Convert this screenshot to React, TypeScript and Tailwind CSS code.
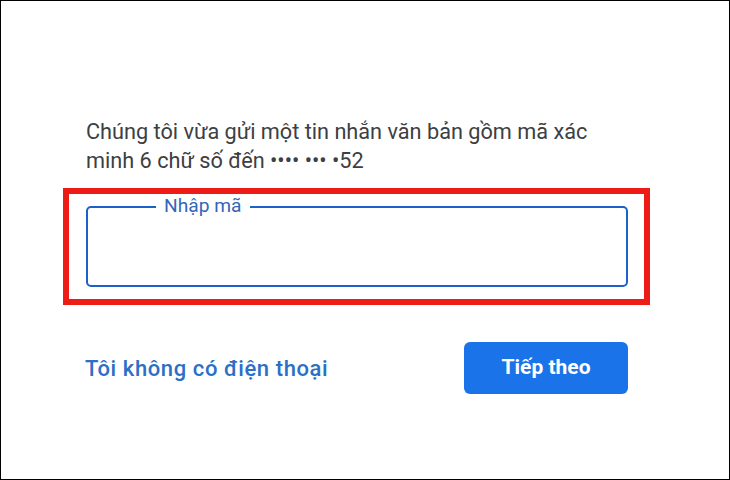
export default function App() {
  return (
    <div
      className="w-[730px] h-[480px] bg-white border border-black overflow-hidden"
      style={{ fontFamily: "Roboto, 'Noto Sans', Arial, sans-serif" }}
    >
      <div className="pt-[116px] pl-[85px] pr-[40px]">
        <p className="text-[21.7px] leading-[29px] text-[#3c4043] whitespace-nowrap">
          Chúng tôi vừa gửi một tin nhắn văn bản gồm mã xác
          <br />
          minh 6 chữ số đến •••• ••• •52
        </p>
      </div>

      {/* highlighted input */}
      <div className="ml-[62px] mt-[13px] w-[587px] h-[117px] border-[6px] border-[#ee1c17] pt-[12px] pl-[17px]">
        <div className="relative w-[542px] h-[81px] border-2 border-[#1a62c9] rounded-[5px]">
          <span className="absolute left-[68px] -top-[13px] bg-white px-[8px] text-[19.2px] leading-[22px] text-[#3466b8]">
            Nhập mã
          </span>
        </div>
      </div>

      <div className="flex items-center justify-between ml-[84px] mr-[101px] mt-[37px]">
        <span className="text-[22px] font-medium text-[#2b6fc6] tracking-[0.6px]">Tôi không có điện thoại</span>
        <button className="w-[164px] h-[52px] rounded-[6px] bg-[#1a73e8] text-white text-[21px] font-bold">
          Tiếp theo
        </button>
      </div>
    </div>
  );
}
